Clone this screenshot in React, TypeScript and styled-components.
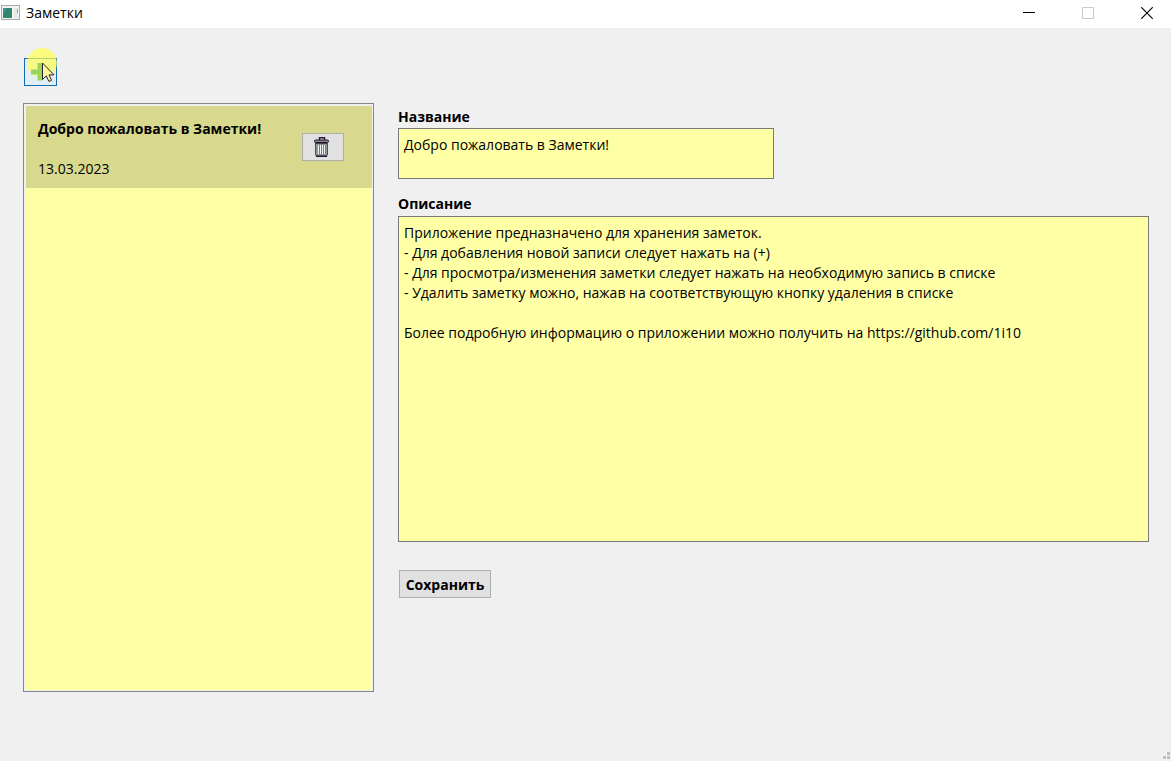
import React, { useState } from "react";
import styled, { createGlobalStyle } from "styled-components";

const GlobalStyle = createGlobalStyle`
  *, *::before, *::after { box-sizing: border-box; }
  body {
    margin: 0;
    background: #f0f0f0;
    color: #000;
    font-family: "Segoe UI", "Open Sans", "Noto Sans", sans-serif;
    font-size: 14px;
    line-height: 20px;
  }
`;

const Window = styled.div`
  position: relative;
  display: flex;
  flex-direction: column;
  min-height: 100vh;
`;

const TitleBar = styled.header`
  display: flex;
  align-items: center;
  height: 28px;
  padding: 0 1px 3px;
  background: #fff;
`;

const WindowTitle = styled.h1`
  flex: 1;
  margin: 0 0 0 6px;
  font-size: 14px;
  font-weight: 400;
`;

const CaptionButton = styled.button`
  display: flex;
  align-items: center;
  justify-content: center;
  width: 46px;
  height: 24px;
  margin-left: 13px;
  padding: 0;
  border: 0;
  background: transparent;
`;

const Toolbar = styled.div`
  display: flex;
  padding: 30px 24px 17px;
`;

const AddButton = styled.button`
  position: relative;
  display: flex;
  align-items: center;
  justify-content: center;
  width: 33px;
  height: 28px;
  padding: 0;
  border: 1px solid #0f6cb5;
  background: #e3eef7;
`;

const Pointer = styled.svg`
  position: absolute;
  left: 2px;
  top: -11px;
  pointer-events: none;
`;

const Workspace = styled.main`
  display: grid;
  flex: 1;
  grid-template-columns: 351px 1fr;
  column-gap: 24px;
  padding: 0 22px 69px 23px;
`;

const ListFrame = styled.div`
  display: flex;
  padding: 2px 1px 1px 2px;
  border: 1px solid #828790;
`;

const NoteList = styled.ul`
  flex: 1;
  margin: 0;
  padding: 0;
  background: #ffffa6;
  list-style: none;
`;

const NoteItem = styled.li`
  display: flex;
  align-items: center;
  justify-content: space-between;
  height: 82px;
  padding: 0 28px 0 12px;
  background: #d9d98d;
`;

const NoteText = styled.div`
  display: grid;
  row-gap: 20px;
  padding-top: 4px;
`;

const PushButton = styled.button`
  display: flex;
  align-items: center;
  justify-content: center;
  height: 28px;
  padding: 0;
  border: 1px solid #adadad;
  background: #e1e1e1;
  color: #000;
  font: inherit;
  font-weight: 700;
`;

const DeleteButton = styled(PushButton)`
  width: 42px;
  padding-right: 2px;
`;

const SaveButton = styled(PushButton)`
  width: 92px;
  margin: 28px 0 0 1px;
  padding-top: 2px;
`;

const Form = styled.form`
  display: flex;
  flex-direction: column;
  align-items: flex-start;
  padding: 4px 0 94px;
`;

const Label = styled.label`
  padding: 0 0 1px;
  font-weight: 700;
`;

const Field = styled.textarea`
  display: block;
  width: 50%;
  height: 51px;
  margin: 0 0 15px;
  padding: 6px 5px;
  border: 1px solid #7a7a7a;
  border-radius: 0;
  outline: 0;
  background: #ffffa6;
  color: #000;
  font: inherit;
  resize: none;
`;

const Description = styled(Field)`
  flex: 1;
  width: 100%;
  min-height: 200px;
  margin: 1px 0 0;
`;

const SizeGrip = styled.svg`
  position: absolute;
  right: 1px;
  bottom: 2px;
`;

const AppIcon = () => (
  <svg width="19" height="15" viewBox="0 0 19 15" aria-hidden="true">
    <rect x=".5" y=".5" width="18" height="14" fill="#f2f2f2" stroke="#a9abab" />
    <rect x="2" y="3" width="9" height="10" fill="#2f8672" />
    <path d="M2 3h4L2 9z" fill="#4a8fa0" />
    <path d="M11 3v10H5z" fill="#3b8468" />
    <path d="M13 3h4v10h-4z" fill="#e2eae8" />
    <path d="M16 4h1v4h-1z" fill="#83aaa0" />
  </svg>
);

const TrashIcon = () => (
  <svg width="16" height="20" viewBox="0 0 16 20" aria-hidden="true">
    <path d="M5.500 3V.7h5V3" fill="none" stroke="#2a1230" strokeWidth="1.400" />
    <path d="M1.500 6h12v12l-1 1h-10l-1-1z" fill="#8d979a" stroke="#4b5357" />
    <rect x=".5" y="3" width="14" height="2.500" rx="1" fill="#7d868b" stroke="#2a1230" />
    <path d="M2 6.500h11" stroke="#3c3f45" />
    <path d="M4.500 8v9M6.500 8v9M8.500 8v9M10.500 8v9" stroke="#f2f4f4" />
    <path d="M5.500 8v9M7.500 8v9M9.500 8v9M11.500 8v9" stroke="#737c80" />
    <path d="M2 19.300h11" stroke="#2a1230" strokeWidth="1.400" />
  </svg>
);

const description = [
  "Приложение предназначено для хранения заметок.",
  "- Для добавления новой записи следует нажать на (+)",
  "- Для просмотра/изменения заметки следует нажать на необходимую запись в списке",
  "- Удалить заметку можно, нажав на соответствующую кнопку удаления в списке",
  "",
  "Более подробную информацию о приложении можно получить на https://github.com/1i10",
].join("\n");

export default function App() {
  const [title, setTitle] = useState("Добро пожаловать в Заметки!");
  const [text, setText] = useState(description);

  return (
    <>
      <GlobalStyle />
      <Window>
        <TitleBar>
          <AppIcon />
          <WindowTitle>Заметки</WindowTitle>
          <CaptionButton type="button" aria-label="Свернуть">
            <svg width="12" height="12" viewBox="0 0 12 12"><path d="M0 5.500h12" stroke="#000" /></svg>
          </CaptionButton>
          <CaptionButton type="button" aria-label="Развернуть" disabled>
            <svg width="12" height="12" viewBox="0 0 12 12"><path d="M.5.5h11v11H.5z" fill="none" stroke="#c8c8c8" /></svg>
          </CaptionButton>
          <CaptionButton type="button" aria-label="Закрыть">
            <svg width="12" height="12" viewBox="0 0 12 12"><path d="M.3.3l11.400 11.400M11.700.3L.3 11.700" stroke="#000" strokeWidth="1.200" /></svg>
          </CaptionButton>
        </TitleBar>
        <Toolbar>
          <AddButton type="button" aria-label="Добавить заметку">
            <Pointer width="32" height="36" viewBox="0 0 32 36" aria-hidden="true">
              <circle cx="15" cy="15" r="15" fill="#ffff50" fillOpacity=".7" />
              <path d="M10.500 15h5v6.500h6.500v5h-6.500v6h-5v-6H4v-5h6.500z" fill="#9bd35f" />
              <path d="M15.500 15v16.500l3.800-3.600 2.600 5.600 2.600-1.200-2.500-5.400h5z" fill="#fff8a0" stroke="#222" />
            </Pointer>
          </AddButton>
        </Toolbar>
        <Workspace>
          <ListFrame>
            <NoteList aria-label="Список заметок">
              <NoteItem>
                <NoteText>
                  <strong>Добро пожаловать в Заметки!</strong>
                  <time dateTime="2023-03-13">13.03.2023</time>
                </NoteText>
                <DeleteButton type="button" aria-label="Удалить"><TrashIcon /></DeleteButton>
              </NoteItem>
            </NoteList>
          </ListFrame>
          <Form onSubmit={(e) => e.preventDefault()}>
            <Label htmlFor="title">Название</Label>
            <Field id="title" spellCheck={false} value={title} onChange={(e) => setTitle(e.target.value)} />
            <Label htmlFor="text">Описание</Label>
            <Description id="text" spellCheck={false} value={text} onChange={(e) => setText(e.target.value)} />
            <SaveButton type="submit">Сохранить</SaveButton>
          </Form>
        </Workspace>
        <SizeGrip width="7" height="7" viewBox="0 0 7 7" aria-hidden="true">
          <path d="M4 0h3v3H4zM4 4h3v3H4zM0 4h3v3H0z" fill="#bfbfbf" />
        </SizeGrip>
      </Window>
    </>
  );
}
